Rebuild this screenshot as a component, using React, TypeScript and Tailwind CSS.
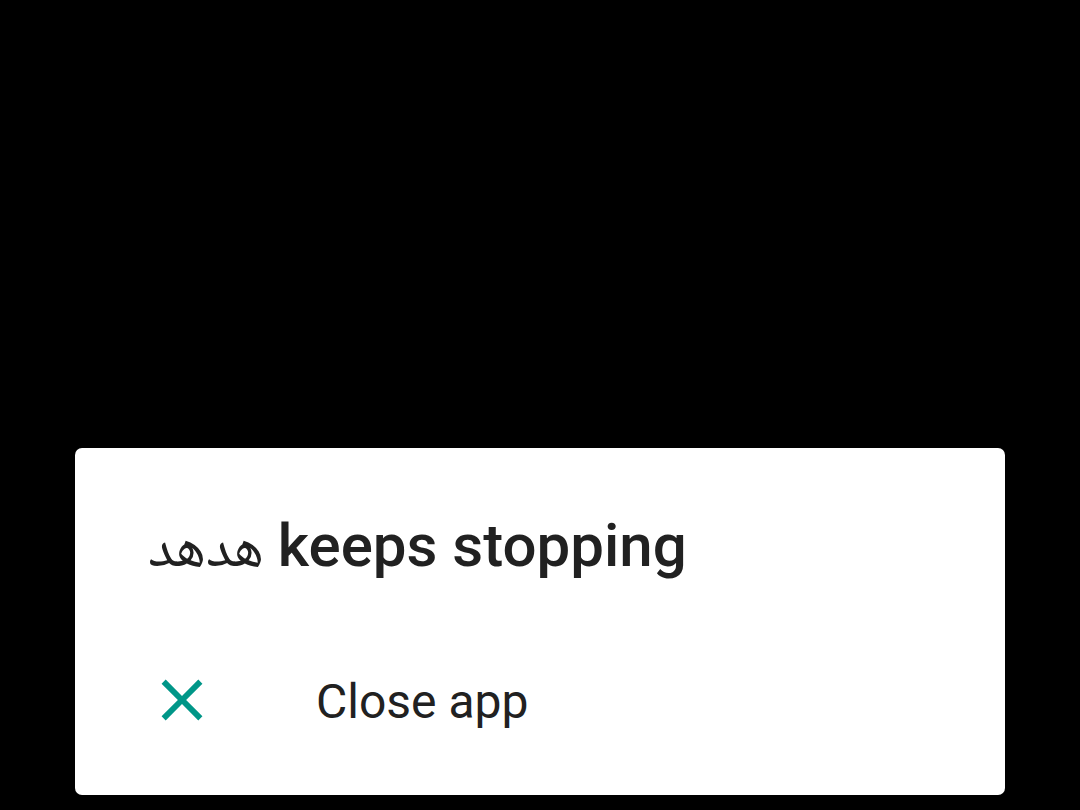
import React from 'react'

const CloseIcon = () => (
  <svg viewBox="0 0 24 24" className="w-[70px] h-[70px] shrink-0" fill="#009688">
    <path d="M19 6.41L17.59 5 12 10.59 6.41 5 5 6.41 10.59 12 5 17.59 6.41 19 12 13.41 17.59 19 19 17.59 13.41 12z" />
  </svg>
)

const App = () => {
  return (
    <div className="w-[1080px] h-[810px] bg-black pt-[448px] px-[75px] overflow-hidden">
      <div className="bg-white rounded-[7px] h-[347px] pl-[73px] pt-[62px] font-['Roboto','Noto_Naskh_Arabic','Noto_Sans_Arabic','DejaVu_Sans',sans-serif] text-[#212121]">
        <h1 className="text-[60px] leading-[72px] font-medium">
          <span className="font-normal text-[59px] mr-[-1px]">هدهد</span> keeps stopping
        </h1>
        <div className="flex items-center mt-[83px] -ml-[1px]">
          <CloseIcon />
          <span className="ml-[99px] text-[48px] leading-[56px] pt-[3px]">Close app</span>
        </div>
      </div>
    </div>
  )
}

export default App
